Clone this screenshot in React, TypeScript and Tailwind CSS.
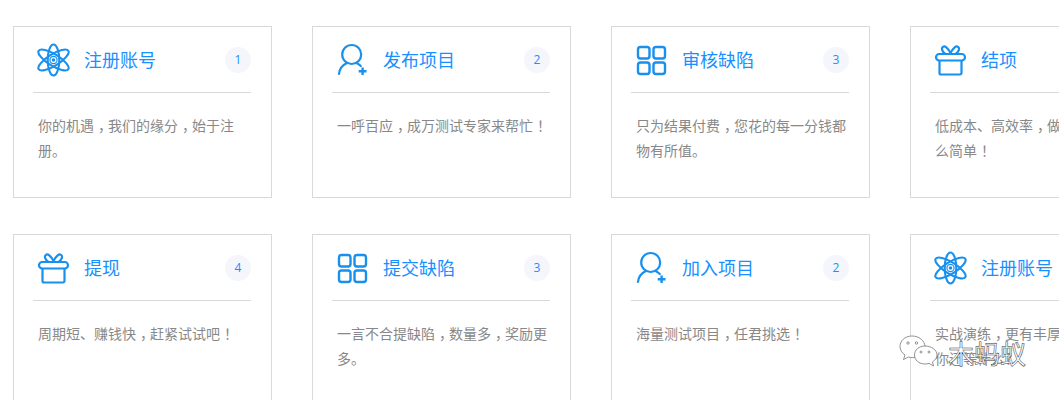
import React from 'react';

const AtomIcon = () => (
  <svg viewBox="0 0 36 36" className="w-9 h-9 shrink-0" fill="none" stroke="#1890ee" strokeWidth="2.1">
    <ellipse cx="18.5" cy="18" rx="5.8" ry="15.5" />
    <ellipse cx="18.5" cy="18" rx="5.8" ry="17.5" transform="rotate(58 18.5 18)" />
    <ellipse cx="18.5" cy="18" rx="5.8" ry="17.5" transform="rotate(-58 18.5 18)" />
    <circle cx="18.5" cy="18" r="3.6" strokeWidth="1.2" />
    <circle cx="18.5" cy="18" r="1.8" fill="#1890ee" stroke="none" />
  </svg>
);

const UserPlusIcon = () => (
  <svg viewBox="0 0 36 36" className="w-9 h-9 shrink-0" fill="none" stroke="#1890ee" strokeWidth="2.2" strokeLinecap="round">
    <circle cx="17.7" cy="12.5" r="9.5" />
    <path d="M5 32 C5.5 27 8.5 23 12.5 21.2" />
    <path d="M22.5 21 C24.2 21.8 25.6 22.8 26.8 24" />
    <path d="M24.7 29.2 H32.5 M28.6 25.4 V33" strokeLinecap="butt" strokeWidth="2.4" />
  </svg>
);

const GridIcon = () => (
  <svg viewBox="0 0 36 36" className="w-9 h-9 shrink-0" fill="none" stroke="#1890ee" strokeWidth="2.4">
    <rect x="5" y="5" width="11.5" height="11.5" rx="2.5" />
    <rect x="20.5" y="5" width="11.5" height="11.5" rx="2.5" />
    <rect x="5" y="20.5" width="11.5" height="11.5" rx="2.5" />
    <rect x="20.5" y="20.5" width="11.5" height="11.5" rx="2.5" />
  </svg>
);

const GiftIcon = () => (
  <svg viewBox="0 0 36 36" className="w-9 h-9 shrink-0" fill="none" stroke="#1890ee" strokeWidth="2.2" strokeLinejoin="round">
    <rect x="4" y="12" width="29" height="6.5" rx="3.2" />
    <path d="M7.5 18.5 V31 a1.5 1.5 0 0 0 1.5 1.5 H28 a1.5 1.5 0 0 0 1.5 -1.5 V18.5" />
    <path d="M18.5 11 C16 6 13 3.500 11 4.800 C9 6.200 10 10 13.500 12" />
    <path d="M18.5 11 C21 6 24 3.500 26 4.800 C28 6.200 27 10 23.500 12" />
  </svg>
);

const WeChatMark = () => (
  <svg viewBox="0 0 40 34" className="w-10 h-[34px]" fill="#fff" stroke="#777777" strokeWidth="0.8">
    <path d="M13 1 C6 1 1 5.800 1 11.500 C1 15 3 18 6 20 L4.500 24.500 L9.500 22 C11 22.500 12 22.600 13.500 22.600 C20.500 22.600 26 17.800 26 11.800 C26 5.800 20 1 13 1 Z" />
    <path d="M26 11 C20 11 15.500 15 15.500 20 C15.500 25 20 29 26 29 C27.500 29 28.500 28.800 30 28.400 L34.500 31 L33.500 26.800 C36.500 25 38 22.500 38 20 C38 15 32.500 11 26 11 Z" />
    <circle cx="9" cy="8" r="1.200" />
    <circle cx="17.500" cy="8" r="1.200" />
    <circle cx="22" cy="17" r="1" />
    <circle cx="30" cy="17" r="1" />
  </svg>
);

type Step = { icon: React.ReactNode; title: string; num: number; desc: string };

const steps: Step[] = [
  { icon: <AtomIcon />, title: '注册账号', num: 1, desc: '你的机遇，我们的缘分，始于注册。' },
  { icon: <UserPlusIcon />, title: '发布项目', num: 2, desc: '一呼百应，成万测试专家来帮忙！' },
  { icon: <GridIcon />, title: '审核缺陷', num: 3, desc: '只为结果付费，您花的每一分钱都物有所值。' },
  { icon: <GiftIcon />, title: '结项', num: 4, desc: '低成本、高效率，做测试原来是这么简单！' },
  { icon: <GiftIcon />, title: '提现', num: 4, desc: '周期短、赚钱快，赶紧试试吧！' },
  { icon: <GridIcon />, title: '提交缺陷', num: 3, desc: '一言不合提缺陷，数量多，奖励更多。' },
  { icon: <UserPlusIcon />, title: '加入项目', num: 2, desc: '海量测试项目，任君挑选！' },
  { icon: <AtomIcon />, title: '注册账号', num: 1, desc: '实战演练，更有丰厚奖金大礼包，你还等什么？' },
];

// the reference font centres ，and ！ in their cell, Noto SC sets them to the left
const Desc: React.FC<{ text: string }> = ({ text }) => (
  <>
    {text.split(/([，！])/).map((part, i) =>
      part === '，' || part === '！' ? (
        <span key={i} className="relative left-[4px]">{part}</span>
      ) : (
        part
      ),
    )}
  </>
);

const StepCard: React.FC<{ step: Step }> = ({ step }) => (
  <div className="h-[172px] border border-[#d9d9d9] bg-white pl-[19px] pr-[20px]">
    <div className="flex h-[66px] items-center border-b border-[#d9d9d9] pl-[2px]">
      <div className="w-[49px] shrink-0">{step.icon}</div>
      <h3 className="flex-1 pb-[1px] text-[18px] leading-[26px] font-normal text-[#1890ff]">{step.title}</h3>
      <span className="flex h-[26px] w-[26px] items-center justify-center rounded-full bg-[#f5f6fb] text-[12px] text-[#1890ff] font-['Open_Sans',sans-serif]">
        {step.num}
      </span>
    </div>
    <p className="pl-[5px] pt-[20px] text-[14px] leading-[25px] text-[#888888]">
      <Desc text={step.desc} />
    </p>
  </div>
);

export default function App() {
  return (
    <div className="relative h-[400px] w-[1059px] overflow-hidden bg-white font-['Noto_Sans_CJK_SC','Noto_Sans',sans-serif]">
      <div className="grid w-[1300px] grid-cols-[repeat(4,259px)] gap-x-10 gap-y-9 pl-[13px] pt-[26px]">
        {steps.map((step, i) => (
          <StepCard key={i} step={step} />
        ))}
      </div>

      {/* watermark */}
      <div className="absolute left-[899px] top-[335px] flex items-start">
        <WeChatMark />
        <span className="ml-[9px] mt-[2px] text-[26px] leading-[32px] text-white [-webkit-text-stroke:0.5px_#333333]">木蚂蚁</span>
      </div>
    </div>
  );
}
